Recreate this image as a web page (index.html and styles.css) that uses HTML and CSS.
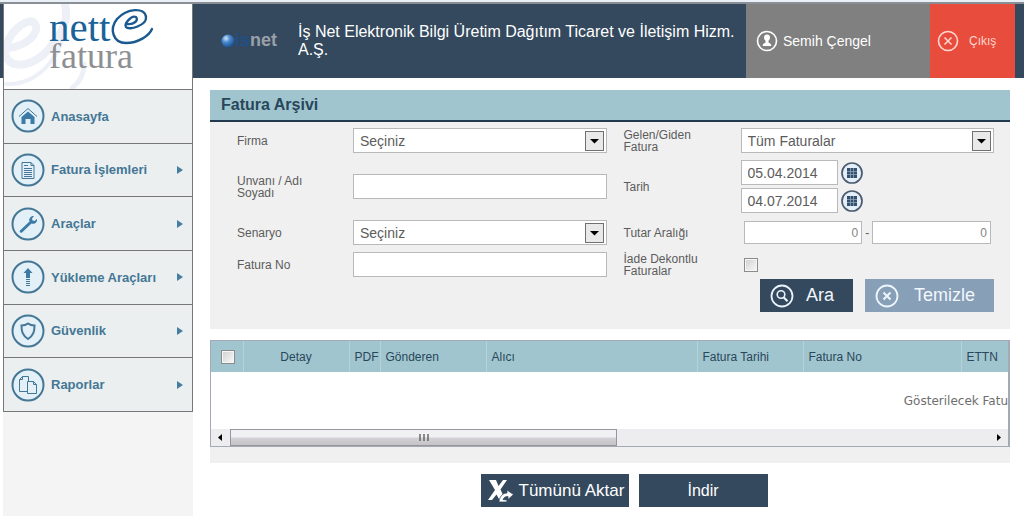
FILE: index.html
```
<!DOCTYPE html>
<html lang="tr">
<head>
<meta charset="utf-8">
<title>Fatura Arşivi</title>
<link rel="stylesheet" href="styles.css">
</head>
<body>
<div class="page">
  <aside class="sidebar">
    <a class="brand" href="#" aria-label="nette fatura">
      <svg width="188" height="85" viewBox="4 4 188 85">
        <g fill="none" stroke="#edf0f7" stroke-width="8" stroke-linecap="round">
          <path d="M8 48C28 46 40 32 35 24S12 28 6 46c-6 22 22 26 42 4C64 32 70 16 64 2"/>
          <path stroke-width="4" d="M6 84C38 86 70 54 64 6"/>
          <path stroke-width="5" d="M84 64c0 10-4 18-12 24"/>
        </g>
        <text class="brand-top" x="49" y="41">nett</text>
        <text class="brand-bottom" x="49" y="68">fatura</text>
        <g fill="none" stroke="#1b5a90" stroke-linecap="round">
          <path stroke-width="2.4" d="M127 24C134 25 139 20 136 17C131 15 124 24 126 27C129 31 147 25 146 17C145 7 127 8 117 19C109 29 113 43 126 43C138 43 149 36 152 29"/>
        </g>
      </svg>
    </a>
    <nav class="menu">
      <a class="menu-item" href="#">
        <svg class="menu-icon" viewBox="0 0 34 34"><circle class="ring" cx="17" cy="17" r="15.5"/><path class="line" d="M8 17.500 17 9.500l9 8"/><path class="solid" d="M17 12.500l6.500 5.500v7h-4v-5h-5v5h-4v-7z"/></svg>
        <span>Anasayfa</span>
      </a>
      <a class="menu-item has-sub" href="#">
        <svg class="menu-icon" viewBox="0 0 34 34"><circle class="ring" cx="17" cy="17" r="15.5"/><path class="line" d="M11 9.500h9l3 3v13H11zM20 9.500v3h3"/><path class="line" d="M13 12.500h4M13 15.500h8M13 17.500h8M13 19.500h8M13 21.500h8M13 23.500h8"/></svg>
        <span>Fatura İşlemleri</span>
      </a>
      <a class="menu-item has-sub" href="#">
        <svg class="menu-icon" viewBox="0 0 34 34"><circle class="ring" cx="17" cy="17" r="15.5"/><path class="solid" d="M9 23.500l9.500-9c-1-3 1.500-6 4.500-5.500l-2 2.500.5 2 2 .5 2.500-2c.5 3.500-2.500 5.500-5.500 4.500L11 25.500c-1.500 1-3-.5-2-2z"/></svg>
        <span>Araçlar</span>
      </a>
      <a class="menu-item has-sub" href="#">
        <svg class="menu-icon" viewBox="0 0 34 34"><circle class="ring" cx="17" cy="17" r="15.5"/><path class="solid" d="M17 8l4.500 5H19v5h-4v-5h-2.500z"/><path class="line" d="M15 19.500h4M15 21.500h4M15 23.500h4M15 25.500h4"/></svg>
        <span>Yükleme Araçları</span>
      </a>
      <a class="menu-item has-sub" href="#">
        <svg class="menu-icon" viewBox="0 0 34 34"><circle class="ring" cx="17" cy="17" r="15.5"/><path class="line thick" d="M17 9.500c2 1.500 4 2 6.500 2 0 6-1 10-6.500 13.500-5.500-3.500-6.500-7.500-6.500-13.500 2.500 0 4.500-.5 6.500-2z"/></svg>
        <span>Güvenlik</span>
      </a>
      <a class="menu-item has-sub" href="#">
        <svg class="menu-icon" viewBox="0 0 34 34"><circle class="ring" cx="17" cy="17" r="15.5"/><path class="line" d="M16.500 23.500h-8v-12l3-3h6v5M11.500 8.500v3h-3M16.500 13.500h6l3 3v9h-9zM22.500 13.500v3h3"/></svg>
        <span>Raporlar</span>
      </a>
    </nav>
  </aside>

  <div class="main">
    <header class="topbar">
      <svg class="isnet" width="62" height="20" viewBox="0 0 62 20" role="img" aria-label="isnet">
        <defs><radialGradient id="ball" cx=".35" cy=".3" r=".75"><stop offset="0" stop-color="#d5e6f7"/><stop offset=".4" stop-color="#4a8bd0"/><stop offset="1" stop-color="#174b8c"/></radialGradient></defs>
        <circle cx="7" cy="10" r="6.500" fill="url(#ball)"/>
        <text x="14" y="15" fill="#1f4f86">is</text>
        <text x="29" y="15" fill="#9aa0a8">net</text>
      </svg>
      <p class="company">İş Net Elektronik Bilgi Üretim Dağıtım Ticaret ve İletişim Hizm. A.Ş.</p>
      <a class="user" href="#">
        <svg width="22" height="22" viewBox="0 0 22 22"><circle cx="11" cy="11" r="9.500" fill="none" stroke="#fff" stroke-width="1.600"/><path fill="#fff" d="M11 4.500c2 0 3 1.300 3 3 0 1.500-.7 2.500-1.500 3.200v1.800c.8.700 2.800.8 2.800 3.500H6.700c0-2.700 2-2.800 2.800-3.500v-1.800C8.700 10 8 9 8 7.500c0-1.700 1-3 3-3z"/></svg>
        <span>Semih Çengel</span>
      </a>
      <a class="logout" href="#">
        <svg width="22" height="22" viewBox="0 0 22 22" fill="none" stroke="#ffd9d0"><circle cx="11" cy="11" r="9.500" stroke-width="1.600"/><path stroke-width="1.500" d="M7.500 7.500l7 7M14.500 7.500l-7 7"/></svg>
        <span>Çıkış</span>
      </a>
    </header>

    <main class="content">
      <h1 class="title">Fatura Arşivi</h1>
      <form class="filter">
        <div class="fields">
          <label for="firma">Firma</label>
          <div class="select"><select id="firma"><option>Seçiniz</option></select><svg class="drop" viewBox="0 0 19 20"><rect x=".5" y=".5" width="18" height="19"/><path d="M5 8h9l-4.500 4.500z"/></svg></div>
          <label class="second" for="yon">Gelen/Giden Fatura</label>
          <div class="select"><select id="yon"><option>Tüm Faturalar</option></select><svg class="drop" viewBox="0 0 19 20"><rect x=".5" y=".5" width="18" height="19"/><path d="M5 8h9l-4.500 4.500z"/></svg></div>

          <label for="unvan">Unvanı / Adı Soyadı</label>
          <input class="text" id="unvan" type="text">
          <label class="second" for="tarih">Tarih</label>
          <div class="dates">
            <div class="date"><input class="text" id="tarih" type="text" value="05.04.2014"><button class="calendar" type="button" aria-label="Başlangıç tarihi"><svg width="22" height="22" viewBox="0 0 22 22"><circle cx="11" cy="11" r="10" fill="#e4eff9" stroke="#4a5b70" stroke-width="1.700"/><path fill="#34506f" d="M6 6h10v10H6z"/><path stroke="#8fa3ba" stroke-width=".8" d="M9.500 6v10M12.500 6v10M6 9.500h10M6 12.500h10"/></svg></button></div>
            <div class="date"><input class="text" type="text" value="04.07.2014" aria-label="Bitiş tarihi"><button class="calendar" type="button" aria-label="Bitiş tarihi seç"><svg width="22" height="22" viewBox="0 0 22 22"><circle cx="11" cy="11" r="10" fill="#e4eff9" stroke="#4a5b70" stroke-width="1.700"/><path fill="#34506f" d="M6 6h10v10H6z"/><path stroke="#8fa3ba" stroke-width=".8" d="M9.500 6v10M12.500 6v10M6 9.500h10M6 12.500h10"/></svg></button></div>
          </div>

          <label for="senaryo">Senaryo</label>
          <div class="select"><select id="senaryo"><option>Seçiniz</option></select><svg class="drop" viewBox="0 0 19 20"><rect x=".5" y=".5" width="18" height="19"/><path d="M5 8h9l-4.500 4.500z"/></svg></div>
          <label class="second" for="tutar">Tutar Aralığı</label>
          <div class="range"><input class="text amount" id="tutar" type="text" value="0"><span>-</span><input class="text amount" type="text" value="0" aria-label="En yüksek tutar"></div>

          <label for="no">Fatura No</label>
          <input class="text" id="no" type="text">
          <label class="second" for="iade">İade Dekontlu Faturalar</label>
          <div class="check-cell"><input class="check" id="iade" type="checkbox"></div>
        </div>
        <div class="actions">
          <button class="btn search" type="button"><svg width="24" height="24" viewBox="0 0 24 24" fill="none" stroke="#eaf3fb"><circle cx="12" cy="12" r="10.500" stroke-width="1.800"/><circle cx="11" cy="10.500" r="3.800" stroke-width="1.600"/><path stroke-width="2.200" d="M13.800 13.500l3.700 3.700"/></svg>Ara</button>
          <button class="btn clear" type="button"><svg width="24" height="24" viewBox="0 0 24 24" fill="none" stroke="#eef6fd"><circle cx="12" cy="12" r="10.500" stroke-width="1.800"/><path stroke-width="2" d="M8.500 8.500l7 7M15.500 8.500l-7 7"/></svg>Temizle</button>
        </div>
      </form>

      <section class="results">
        <div class="grid">
          <table>
            <colgroup><col class="c-check"><col class="c-mid"><col class="c-pdf"><col class="c-mid"><col class="c-buyer"><col class="c-mid"><col class="c-no"><col></colgroup>
            <thead>
              <tr><th><input class="check" type="checkbox" aria-label="Tümünü seç"></th><th class="center">Detay</th><th class="tight">PDF</th><th>Gönderen</th><th>Alıcı</th><th>Fatura Tarihi</th><th>Fatura No</th><th>ETTN</th></tr>
            </thead>
            <tbody><tr><td colspan="8">Gösterilecek Fatu</td></tr></tbody>
          </table>
          <div class="scroll">
            <svg width="19" height="17" viewBox="0 0 19 17"><path d="M11 5v7L7 8.500z"/></svg>
            <div class="track"><div class="thumb"><svg width="12" height="9" viewBox="0 0 12 9"><path fill="none" stroke="#555" stroke-width="1.300" d="M2 1v7M6 1v7M10 1v7"/></svg></div></div>
            <svg width="19" height="17" viewBox="0 0 19 17"><path d="M8 5v7l4-3.500z"/></svg>
          </div>
        </div>
      </section>

      <div class="exports">
        <button class="btn export" type="button"><svg width="26" height="24" viewBox="0 0 26 24"><path fill="#fff" d="M1 1h7l2.500 6L15 1h4l-6.500 9.500 3 6.500-4 4-3-5.500L4 21H0l7-10z"/><path fill="#fff" stroke="#34495e" stroke-width=".8" d="M11 22c1-5 4-8 8-8v-3l6.500 4.500-5.500 5v-3c-3 0-4 1-5 3l4 .5v2h-8z"/></svg>Tümünü Aktar</button>
        <button class="btn download" type="button">İndir</button>
      </div>
    </main>
  </div>
</div>
</body>
</html>
```
FILE: styles.css
```
* {
  box-sizing: border-box;
}

body {
  margin: 0;
  background: #fff;
  font-family: "Liberation Sans", Arial, sans-serif;
  font-size: 12px;
  color: #5c5c5c;
}

a {
  color: inherit;
  text-decoration: none;
}

input,
select,
button {
  margin: 0;
  font-family: inherit;
  border-radius: 0;
}

svg {
  flex: none;
}

.page {
  display: flex;
  min-height: 100vh;
  padding-left: 3px;
  border-top: 2px solid #eaf0f7;
  background: linear-gradient(#8a8f96 2px, #34495e 2px) no-repeat 0 0 / 100% 76px;
}

/* Sidebar */
.sidebar {
  flex: none;
  width: 190px;
  margin-top: 2px;
  background: #f4f4f4;
}

.brand {
  display: block;
  height: 85px;
  border: solid #777;
  border-width: 0 1px;
  background: #fff;
}

.brand svg {
  display: block;
}

.brand-top,
.brand-bottom {
  font-family: "Liberation Serif", "Times New Roman", serif;
}

.brand-top {
  font-size: 41px;
  fill: #1b6299;
}

.brand-bottom {
  font-size: 36px;
  fill: #8d8f92;
}

.menu {
  display: grid;
  grid-auto-rows: 1fr;
  height: 323px;
  border: 1px solid #777;
  border-top: 0;
}

.menu-item {
  display: flex;
  align-items: center;
  gap: 6px;
  padding: 0 9px 0 7px;
  border-top: 1px solid #777;
  background: #ebeff0;
  color: #447795;
  font-size: 13px;
  font-weight: bold;
}

.has-sub::after {
  content: "";
  margin-left: auto;
  border: solid transparent;
  border-width: 4px 0 4px 6px;
  border-left-color: #447fa3;
}

.menu-icon {
  width: 34px;
  height: 34px;
}

.ring {
  fill: #e3f0f8;
  stroke: #447795;
  stroke-width: 2;
}

.line {
  fill: none;
  stroke: #447795;
}

.thick {
  stroke-width: 2;
}

.solid {
  fill: #3b7ba5;
}

/* Top bar */
.main {
  flex: 1;
  min-width: 0;
}

.topbar {
  display: flex;
  align-items: center;
  height: 74px;
  margin-top: 2px;
  padding: 0 9px 0 28px;
  color: #fff;
}

.isnet {
  font-size: 18px;
  font-weight: bold;
}

.company {
  flex: 1;
  margin: 0 8px 0 15px;
  font-size: 16px;
  line-height: 18px;
}

.user,
.logout {
  display: flex;
  align-items: center;
  align-self: stretch;
}

.user {
  gap: 5px;
  width: 184px;
  padding-left: 10px;
  background: #808080;
  font-size: 14px;
}

.logout {
  gap: 10px;
  width: 85px;
  padding-left: 7px;
  background: #e84c3d;
  color: #ffd9d0;
  font-size: 12px;
}

/* Content */
.content {
  padding: 12px 14px 9px 17px;
}

.title {
  margin: 0;
  padding: 0 11px;
  border-bottom: 2px solid #22384c;
  background: #a1c5ce;
  color: #29475b;
  font-size: 16px;
  line-height: 30px;
}

.filter {
  padding: 6px 16px 17px 27px;
  background: #f0f0f0;
}

.fields {
  display: grid;
  grid-template-columns: 116px 1fr 134px 1fr;
  row-gap: 7px;
  align-items: center;
}

.fields label {
  padding-right: 20px;
  line-height: 12px;
}

.fields .second {
  padding-left: 17px;
}

.text,
.select select {
  display: block;
  width: 100%;
  height: 25px;
  padding: 0 6px;
  border: 1px solid #b9b9b9;
  background: #fff;
  color: #5c5c5c;
  font-size: 14px;
}

.select {
  position: relative;
}

.select select {
  appearance: none;
}

.drop {
  position: absolute;
  top: 3px;
  right: 3px;
  width: 19px;
  height: 20px;
  pointer-events: none;
}

.drop rect {
  fill: #e9e9e9;
  stroke: #707070;
}

.dates {
  display: grid;
  gap: 3px;
}

.date {
  display: flex;
  align-items: center;
  gap: 3px;
}

.date .text {
  width: 97px;
}

.calendar {
  display: flex;
  padding: 0;
  border: 0;
  background: none;
}

.range {
  display: flex;
  align-items: center;
  gap: 3px;
  padding: 0 3px;
}

.amount {
  flex: 1;
  min-width: 0;
  height: 23px;
  padding: 0 3px;
  color: #858585;
  font-size: 12px;
  text-align: right;
}

.check-cell {
  padding-left: 3px;
}

.check {
  display: block;
  appearance: none;
  width: 14px;
  height: 14px;
  border: 1px solid #8b8b8b;
  background: linear-gradient(135deg, #cfcfcf, #fafafa);
  box-shadow: inset 0 0 0 1px #f6f6f6;
}

.btn {
  display: flex;
  align-items: center;
  height: 33px;
  padding: 0;
  border: 0;
  background: #34495e;
  color: #fff;
  font-size: 16px;
}

.actions {
  display: flex;
  justify-content: flex-end;
  gap: 12px;
  margin-top: 2px;
}

.search,
.clear {
  padding-left: 10px;
  color: #f1f7fc;
  font-size: 18px;
}

.search {
  gap: 12px;
  width: 93px;
}

.clear {
  gap: 15px;
  width: 129px;
  background: #879fb7;
}

/* Results */
.results {
  margin-top: 11px;
  padding-bottom: 16px;
  background: #f0f0f0;
}

.grid {
  border: solid #a3a9b5;
  border-width: 1px 2px 1px 1px;
  background: #fff;
}

table {
  width: 100%;
  table-layout: fixed;
  border-collapse: collapse;
}

.c-check {
  width: 32px;
}

.c-mid {
  width: 106px;
}

.c-pdf {
  width: 31px;
}

.c-buyer {
  width: 211px;
}

.c-no {
  width: 158px;
}

th {
  height: 31px;
  padding: 0 5px;
  border-left: 1px solid #b7d3da;
  background: #a1c5ce;
  color: #29475b;
  font-weight: normal;
  text-align: left;
}

th:first-child {
  padding: 0 10px;
  border-left: 0;
}

th.center {
  text-align: center;
}

th.tight {
  padding: 0 0 0 5px;
}

td {
  height: 57px;
  padding: 0;
  color: #6e6e6e;
  font-family: "DejaVu Sans", Verdana, sans-serif;
  text-align: right;
}

.scroll {
  display: flex;
  background: #edecee;
}

.track {
  flex: 1;
}

.thumb {
  display: flex;
  align-items: center;
  justify-content: center;
  width: 51%;
  height: 17px;
  border: 1px solid #98969c;
  background: linear-gradient(#f1f0f2 45%, #d3d1d6 55%, #c5c2c8);
}

.exports {
  display: flex;
  justify-content: center;
  gap: 10px;
  margin: 11px 0 0 28px;
}

.export {
  gap: 5px;
  width: 148px;
  padding-left: 7px;
  font-size: 17px;
}

.download {
  justify-content: center;
  width: 129px;
}
```
